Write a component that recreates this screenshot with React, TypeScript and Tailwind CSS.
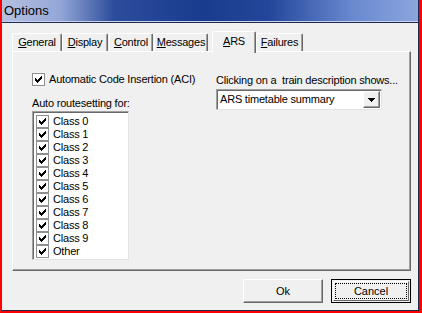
import React from "react";

// Classic Win32 "Options" dialog, ARS tab
const font = { fontFamily: '"Liberation Sans", Arial, sans-serif' };

interface TabProps {
  label: string;
  hot: number;
  width: string;
  margin: string;
  selected?: boolean;
}

function Tab({ label, hot, width, margin, selected }: TabProps) {
  const before = label.slice(0, hot);
  const key = label.charAt(hot);
  const after = label.slice(hot + 1);
  return (
    <div
      className={`${width} ${margin} ${
        selected ? "h-[22px] -mb-[2px] z-10 bg-[#f0f0f0] pt-[3px]" : "h-[18px] pt-[2px]"
      } relative flex justify-center rounded-t-[2px] border-l border-t border-white border-r border-r-[#696969] shadow-[inset_-1px_0_0_#a0a0a0] text-[11px] leading-[13px] tracking-[-0.2px] text-black whitespace-nowrap`}
    >
      <span>
        {before}
        <span className="underline underline-offset-[1px]">{key}</span>
        {after}
      </span>
    </div>
  );
}

// 7x7 bitmap tick, rows top to bottom
const tick = [
  [6, 1],
  [5, 2],
  [0, 1, 4, 3],
  [0, 2, 3, 3],
  [0, 5],
  [1, 3],
  [2, 1],
];

function Check() {
  return (
    <div className="w-[13px] h-[13px] shrink-0 border border-[#8e8f8f] bg-white flex items-center justify-center">
      <svg width="7" height="7" viewBox="0 0 7 7" shapeRendering="crispEdges">
        {tick.map((row, y) => {
          const rects = [];
          for (let i = 0; i < row.length; i += 2) {
            rects.push(
              <rect key={`${y}-${i}`} x={row[i]} y={y} width={row[i + 1]} height={1} fill="#000" />
            );
          }
          return rects;
        })}
      </svg>
    </div>
  );
}

const classes = [
  "Class 0",
  "Class 1",
  "Class 2",
  "Class 3",
  "Class 4",
  "Class 5",
  "Class 6",
  "Class 7",
  "Class 8",
  "Class 9",
  "Other",
];

export default function App() {
  return (
    <div
      className="w-[422px] h-[313px] bg-[#ff0000] pl-[2px] pr-[3px] pb-[2px] flex"
      style={font}
    >
      <div className="flex-1 flex flex-col border-r border-b border-[#1f2a4d]">
        {/* --- title bar --- */}
        <div className="h-[21px] flex items-center pl-[2px] bg-[linear-gradient(90deg,#b6c1e2_0%,#93a6d6_14%,#2c4c9c_27%,#1a3c8e_48%,#24469a_64%,#6888cf_84%,#8ba5dd_100%)]">
          <span className="text-[13px] text-black" style={font}>
            Options
          </span>
        </div>
        <div className="h-[1px] bg-[#c6d3f0]" />
        <div className="h-[1px] bg-[#1f2a4d]" />

        {/* --- body --- */}
        <div className="flex-1 bg-[#f0f0f0] pt-[8px] pl-[10px] pr-[7px] flex flex-col">
          <div className="flex items-end h-[20px]">
            <Tab label="General" hot={0} width="w-[50px]" margin="ml-0" />
            <Tab label="Display" hot={0} width="w-[46px]" margin="ml-0" />
            <Tab label="Control" hot={0} width="w-[44px]" margin="ml-[1px]" />
            <Tab label="Messages" hot={0} width="w-[54px]" margin="ml-[1px]" />
            <Tab label="ARS" hot={0} width="w-[44px]" margin="ml-[4px]" selected />
            <Tab label="Failures" hot={0} width="w-[47px]" margin="ml-0" />
          </div>

          {/* --- tab panel --- */}
          <div className="h-[220px] border-l border-t border-white border-r border-b border-r-[#696969] border-b-[#696969] shadow-[inset_-1px_-1px_0_#a0a0a0] flex text-[11px] leading-[13px] tracking-[-0.2px] text-black">
            <div className="w-[184px] shrink-0 pl-[19px] pt-[21px] flex flex-col">
              <div className="flex items-center h-[13px] whitespace-nowrap">
                <Check />
                <span className="ml-[4px]">Automatic Code Insertion (ACI)</span>
              </div>
              <div className="mt-[11px] h-[13px] whitespace-nowrap">Auto routesetting for:</div>
              <div className="mt-[1px] w-[97px] h-[149px] bg-white border-t border-l border-[#a0a0a0] border-r border-b border-r-[#e3e3e3] border-b-[#e3e3e3] shadow-[inset_1px_1px_0_#696969] pt-[3px] pl-[3px]">
                {classes.map((c) => (
                  <div key={c} className="flex items-center h-[13px]">
                    <Check />
                    <span className="ml-[4px]">{c}</span>
                  </div>
                ))}
              </div>
            </div>

            <div className="pl-[19px] pt-[22px] flex flex-col">
              <div className="h-[13px] whitespace-pre">
                Clicking on a  train description shows...
              </div>
              <div className="mt-[2px] w-[166px] h-[21px] bg-white border-t border-l border-[#a0a0a0] border-r border-b border-r-[#e3e3e3] border-b-[#e3e3e3] shadow-[inset_1px_1px_0_#696969] flex items-center pl-[3px] pr-[1px]">
                <span className="flex-1">ARS timetable summary</span>
                <div className="w-[17px] h-[17px] bg-[#f0f0f0] border-l border-t border-white border-r border-b border-r-[#696969] border-b-[#696969] shadow-[inset_-1px_-1px_0_#a0a0a0] flex items-center justify-center">
                  <svg width="7" height="4" viewBox="0 0 7 4" shapeRendering="crispEdges">
                    <path d="M0 0h7v1H6v1H5v1H4v1H3V3H2V2H1V1H0z" fill="#000" />
                  </svg>
                </div>
              </div>
            </div>
          </div>

          {/* --- buttons --- */}
          <div className="flex justify-end gap-[8px] mt-[8px]">
            <button className="w-[80px] h-[24px] bg-[#f0f0f0] border-l border-t border-white border-r border-b border-r-[#696969] border-b-[#696969] shadow-[inset_-1px_-1px_0_#a0a0a0] text-[11px] text-black">
              Ok
            </button>
            <button className="w-[80px] h-[24px] bg-[#f0f0f0] border border-black p-[1px] text-[11px] text-black">
              <div className="w-full h-full border-l border-t border-white border-r border-b border-r-[#696969] border-b-[#696969] p-[1px]">
                <div className="w-full h-full border border-dotted border-black flex items-center justify-center">
                  Cancel
                </div>
              </div>
            </button>
          </div>
        </div>
      </div>
    </div>
  );
}
